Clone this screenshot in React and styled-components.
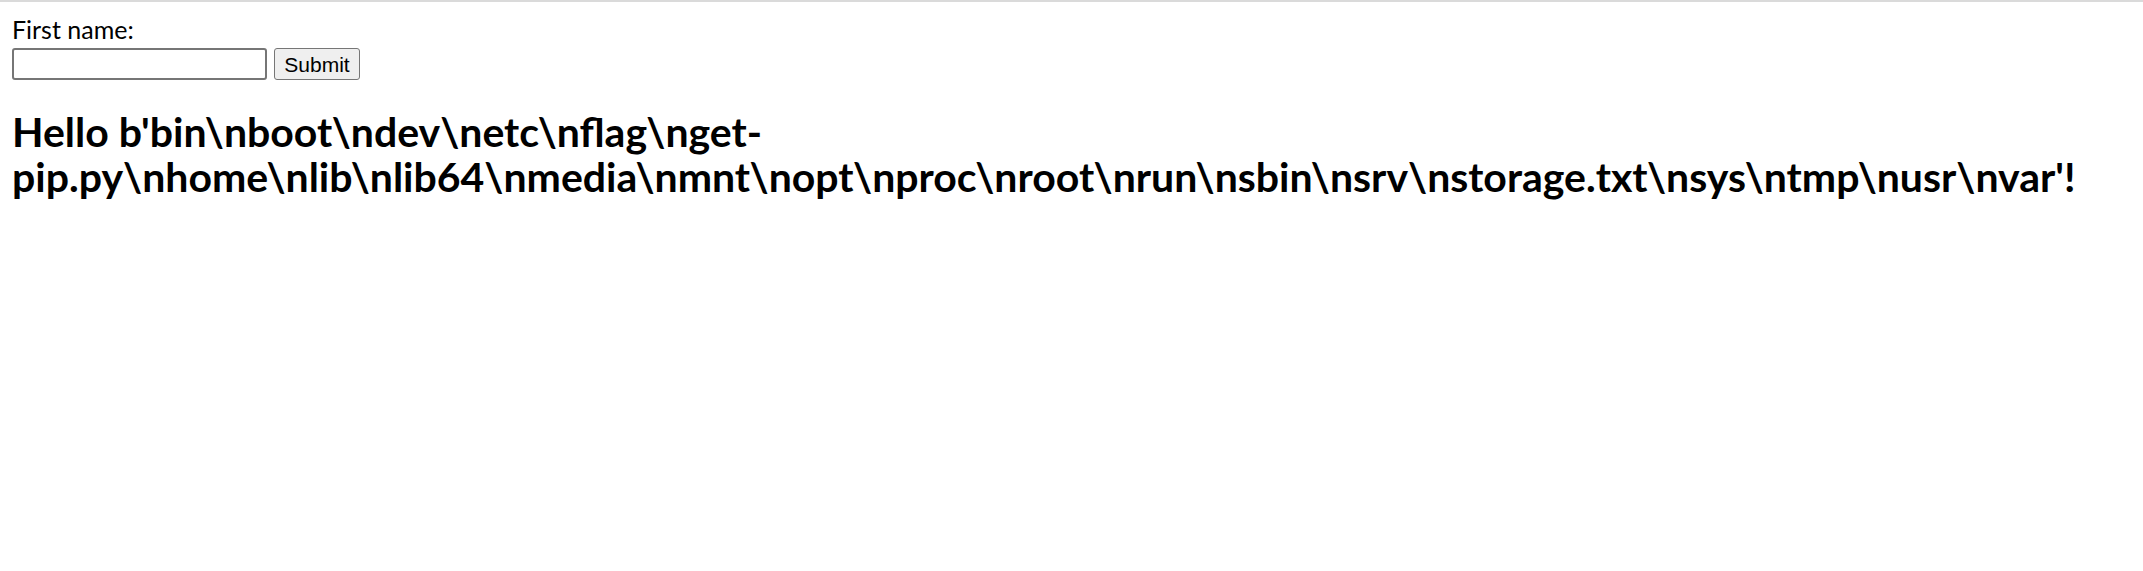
import React from 'react';
import styled, { createGlobalStyle } from 'styled-components';

const Global = createGlobalStyle`
  html, body {
    margin: 0;
    background: #fff;
  }
  body {
    border-top: 2px solid #dadada;
    padding: 10px 12px 12px 12px;
    font-family: Lato, "Noto Sans", sans-serif;
    font-size: 25px;
    color: #000;
  }
`;

const Form = styled.form`
  margin: 0;
`;

const Label = styled.div`
  height: 34px;
  line-height: 34px;
`;

const Row = styled.div`
  display: flex;
  align-items: center;
  gap: 7px;
  height: 36px;
`;

const TextInput = styled.input`
  box-sizing: border-box;
  width: 255px;
  height: 32px;
  border: 2px solid #767676;
  border-radius: 3px;
  padding: 2px 3px;
  font-size: 20px;
  background: #fff;
`;

const SubmitButton = styled.button`
  box-sizing: border-box;
  width: 86px;
  height: 32px;
  padding: 0;
  border: 1.5px solid #767676;
  border-radius: 3px;
  background: #efefef;
  font-family: "Liberation Sans", Arial, sans-serif;
  font-size: 21px;
  line-height: 1;
  color: #000;
`;

const Greeting = styled.h2`
  margin: 27px 0 0 0;
  font-family: Lato, "Noto Sans", sans-serif;
  font-size: 41px;
  font-weight: 700;
  line-height: 45px;
`;

export default function App() {
  const listing =
    "b'bin\\nboot\\ndev\\netc\\nflag\\nget-pip.py\\nhome\\nlib\\nlib64\\nmedia\\nmnt\\nopt\\nproc\\nroot\\nrun\\nsbin\\nsrv\\nstorage.txt\\nsys\\ntmp\\nusr\\nvar'";
  return (
    <>
      <Global />
      <Form onSubmit={(e) => e.preventDefault()}>
        <Label>First name:</Label>
        <Row>
          <TextInput type="text" name="name" />
          <SubmitButton type="submit">Submit</SubmitButton>
        </Row>
      </Form>
      <Greeting>Hello {listing}!</Greeting>
    </>
  );
}
